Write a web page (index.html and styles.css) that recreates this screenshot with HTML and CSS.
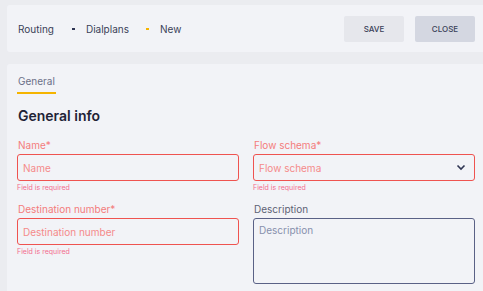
FILE: index.html
```html
<!DOCTYPE html>
<html>
<head>
<meta charset="utf-8">
<link rel="stylesheet" href="styles.css">
</head>
<body>
<div class="page">
  <header class="topbar">
    <nav class="crumbs">
      <span class="crumb">Routing</span>
      <span class="dot"></span>
      <span class="crumb">Dialplans</span>
      <span class="dot dot-active"></span>
      <span class="crumb">New</span>
    </nav>
    <div class="actions">
      <button class="btn btn-save">SAVE</button>
      <button class="btn btn-close">CLOSE</button>
    </div>
  </header>
  <main class="panel">
    <div class="tabs"><span class="tab">General</span></div>
    <h2 class="title">General info</h2>
    <div class="grid">
      <div class="field invalid">
        <label class="label">Name*</label>
        <input class="input" placeholder="Name">
        <div class="error">Field is required</div>
      </div>
      <div class="field invalid">
        <label class="label">Flow schema*</label>
        <div class="select">
          <span class="placeholder">Flow schema</span>
          <svg class="chev" width="10" height="7" viewBox="0 0 10 7"><path d="M1.5 1.5 L5 5 L8.5 1.5" fill="none" stroke="#2f3553" stroke-width="1.6"/></svg>
        </div>
        <div class="error">Field is required</div>
      </div>
      <div class="field invalid">
        <label class="label">Destination number*</label>
        <input class="input" placeholder="Destination number">
        <div class="error">Field is required</div>
      </div>
      <div class="field">
        <label class="label">Description</label>
        <textarea class="textarea" placeholder="Description"></textarea>
      </div>
    </div>
  </main>
</div>
</body>
</html>
```

FILE: styles.css
```css
* { box-sizing: border-box; }
html, body { margin: 0; padding: 0; }
body {
  background: #ebecf0;
  font-family: Inter, "Noto Sans", sans-serif;
  color: #2b2f45;
  width: 483px;
  height: 291px;
  overflow: hidden;
}
.page {
  padding: 5px 0 0 7px;
  display: flex;
  flex-direction: column;
  gap: 12px;
}
.topbar {
  height: 47px;
  background: #f2f3f7;
  border-radius: 3px 0 0 3px;
  display: flex;
  align-items: center;
  justify-content: space-between;
  padding: 0 8px 0 11px;
}
.crumbs {
  display: flex;
  align-items: center;
  font-size: 10px;
  color: #3a3f58;
}
.crumb { line-height: 14px; }
.dot {
  width: 3px;
  height: 2px;
  background: #2f3553;
  margin: 0 11px 0 18px;
}
.dot-active { background: #f5b400; margin-left: 17px; }
.actions { display: flex; gap: 11px; }
.btn {
  width: 60px;
  height: 26px;
  border: none;
  border-radius: 2px;
  font-family: inherit;
  font-size: 8px;
  font-weight: 500;
  color: #3a3f58;
  padding: 0;
}
.btn-save { background: #e6e7ec; }
.btn-close { background: #d4d7e1; }
.panel {
  background: #f2f3f7;
  border-radius: 3px 0 0 0;
  padding: 10px 8px 0 10px;
  height: 240px;
}
.tabs { display: flex; }
.tab {
  font-size: 10px;
  line-height: 14px;
  color: #6b7088;
  padding: 0 1px 4px;
  border-bottom: 2px solid #f5b400;
}
.title {
  margin: 12px 0 12px 1px;
  font-size: 14px;
  line-height: 20px;
  font-weight: 600;
  color: #1f2336;
}
.grid {
  display: grid;
  grid-template-columns: 222px 222px;
  column-gap: 14px;
  row-gap: 9px;
}
.field { display: flex; flex-direction: column; }
.label {
  font-size: 10px;
  line-height: 14px;
  color: #5d6275;
  margin: 0 0 2px 1px;
}
.invalid .label { color: #f47c7c; }
.input, .select {
  height: 27px;
  border: 1px solid #ef5350;
  border-radius: 3px;
  background: transparent;
  font-family: inherit;
  font-size: 10px;
  padding: 0 5px;
  outline: none;
}
.input::placeholder, .placeholder { color: #f58a8a; }
.select {
  display: flex;
  align-items: center;
  justify-content: space-between;
  padding-right: 8px;
}
.error {
  margin-top: 2px;
  font-size: 7px;
  line-height: 10px;
  color: #f26d8e;
}
.textarea {
  height: 66px;
  border: 1px solid #5a6186;
  border-radius: 3px;
  background: transparent;
  font-family: inherit;
  font-size: 10px;
  padding: 5px 5px;
  resize: none;
  outline: none;
}
.textarea::placeholder { color: #8790ad; }
```
